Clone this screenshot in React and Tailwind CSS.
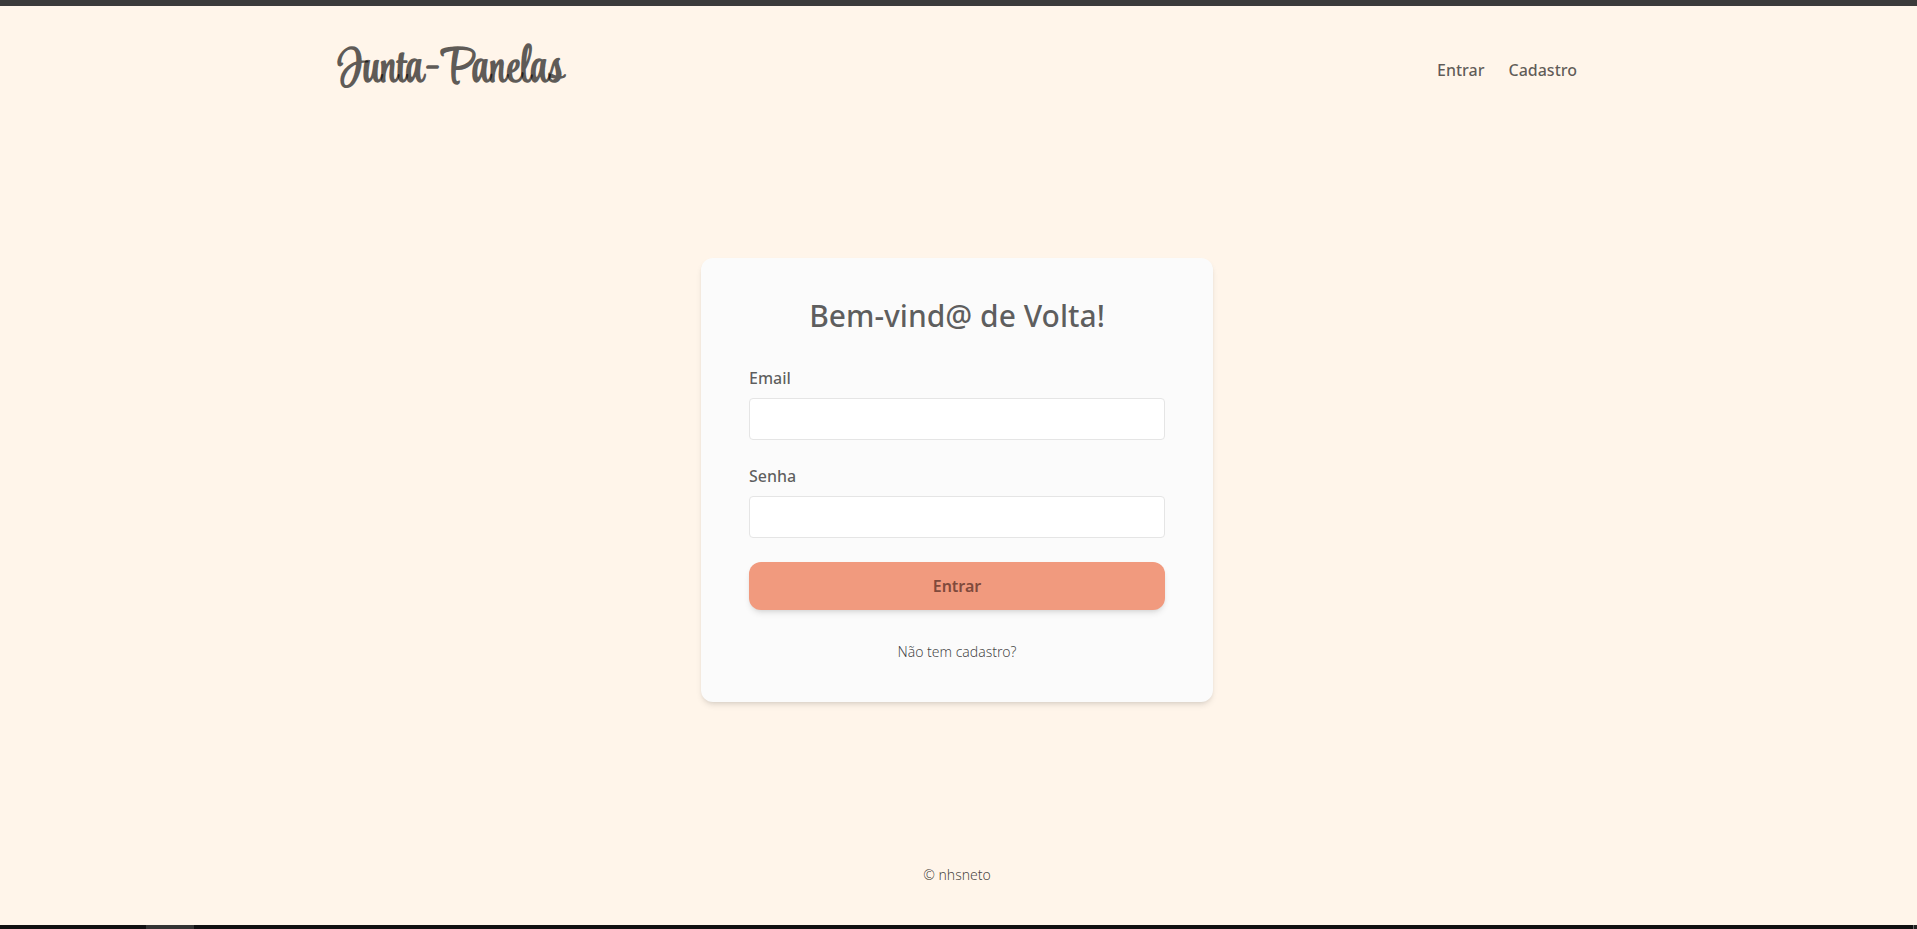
function Field({ id, label, type }) {
  return (
    <div className="flex flex-col gap-2">
      <label htmlFor={id} className="font-medium">
        {label}
      </label>
      <input
        id={id}
        name={id}
        type={type}
        className="w-full rounded-sm border border-[#e5e5e5] bg-white px-3 py-2"
      />
    </div>
  );
}

export default function App() {
  return (
    <div className="flex min-h-screen flex-col bg-[#fff5ea] font-['Noto_Sans',sans-serif] text-black/64">
      <div className="h-1.5 bg-[#3b3b3b]" />

      <div className="flex grow flex-col pr-[3px]">
        <header className="mx-auto flex w-full max-w-7xl items-center justify-between px-5 py-10">
          <a
            href="#inicio"
            className="font-['Style_Script','Liberation_Serif',serif] text-5xl/12 font-bold"
          >
            Junta-Panelas
          </a>
          <nav className="flex gap-6 font-medium">
            <a href="#entrar">Entrar</a>
            <a href="#cadastro">Cadastro</a>
          </nav>
        </header>

        <main className="flex grow items-center justify-center">
          <form className="flex w-full max-w-lg flex-col rounded-xl bg-[#fbfbfb] px-12 py-10 shadow-md">
            <h1 className="text-center text-3xl/9 font-medium">Bem-vind@ de Volta!</h1>
            <div className="mt-8 flex flex-col gap-6">
              <Field id="email" label="Email" type="email" />
              <Field id="senha" label="Senha" type="password" />
              <button
                type="submit"
                className="h-12 rounded-xl bg-[#f19a7e] font-semibold text-[#804a3c] shadow-md"
              >
                Entrar
              </button>
            </div>
            <a href="#cadastro" className="mt-8 text-center text-sm font-light text-black/75">
              Não tem cadastro?
            </a>
          </form>
        </main>

        <footer className="py-10 text-center text-sm font-light text-black/75">© nhsneto</footer>
      </div>

      <div className="flex h-1 bg-[#111111]">
        <div className="ml-[146px] w-12 bg-[#333333]" />
        <div className="ml-auto w-1 border-l border-[#6b6b6b] bg-[#222222]" />
      </div>
    </div>
  );
}
